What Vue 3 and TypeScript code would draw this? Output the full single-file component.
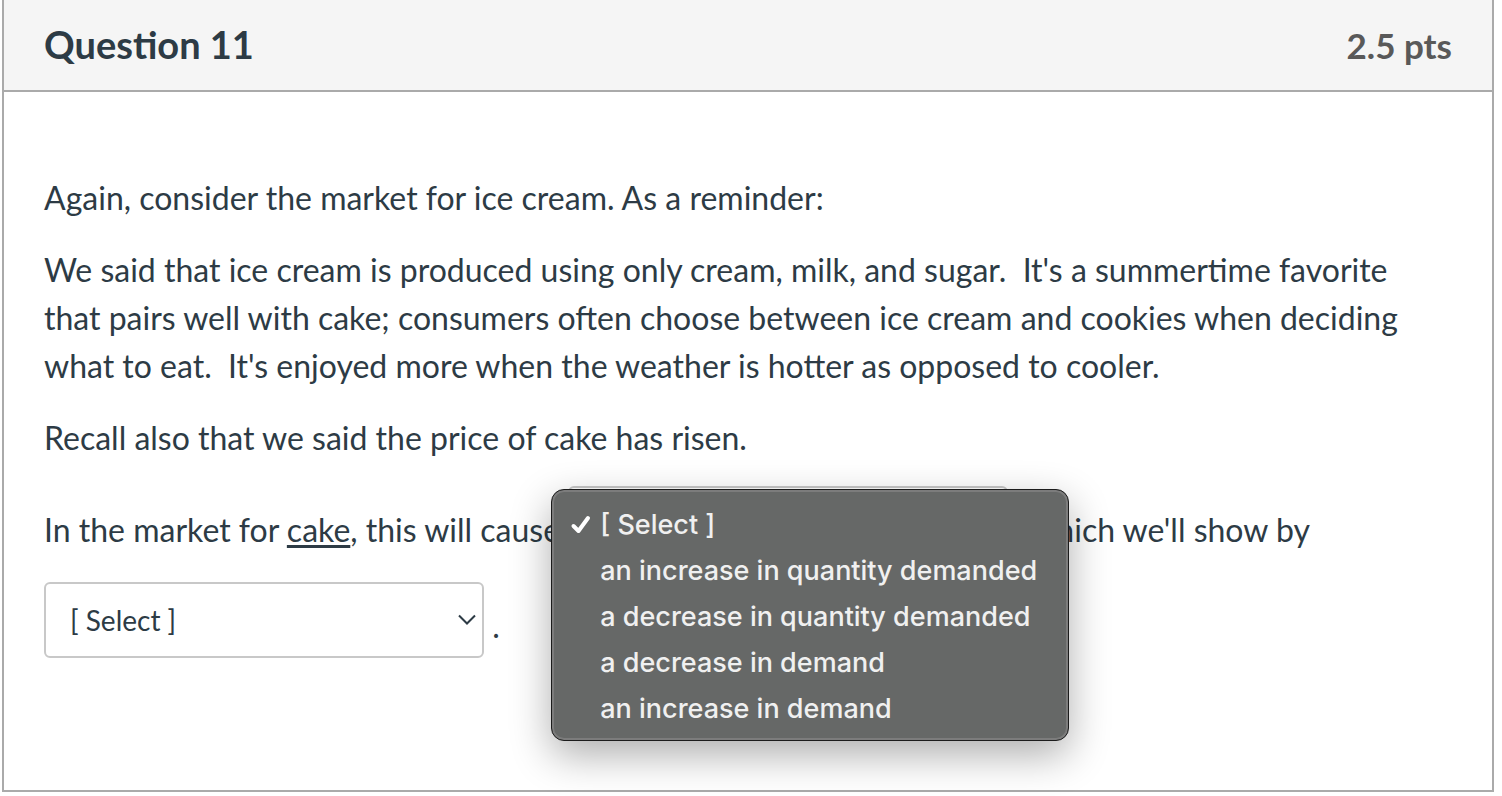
<script setup lang="ts">
import { ref } from 'vue'

const placeholder = '[ Select ]'
const effectOptions: string[] = [
  placeholder,
  'an increase in quantity demanded',
  'a decrease in quantity demanded',
  'a decrease in demand',
  'an increase in demand',
]

const effect = ref(placeholder)
const shownBy = ref(placeholder)
const menuOpen = ref(true)

function choose(option: string) {
  effect.value = option
  menuOpen.value = false
}
</script>

<template>
  <section class="question">
    <header class="question-header">
      <h2 class="title">Question 11</h2>
      <span class="points">2.5 pts</span>
    </header>
    <div class="question-body">
      <p>Again, consider the market for ice cream. As a reminder:</p>
      <p>
        We said that ice cream is produced using only cream, milk, and sugar.&nbsp; It's a summertime favorite
        that pairs well with cake; consumers often choose between ice cream and cookies when deciding
        what to eat.&nbsp; It's enjoyed more when the weather is hotter as opposed to cooler.
      </p>
      <p>Recall also that we said the price of cake has risen.</p>
      <p>
        In the market for <u>cake</u>, this will cause
        <span class="dropdown">
          <select v-model="effect" class="answer" aria-label="Effect in the market for cake" @mousedown.prevent="menuOpen = !menuOpen">
            <option v-for="option in effectOptions" :key="option">{{ option }}</option>
          </select>
          <svg class="chevron" viewBox="0 0 18 12" aria-hidden="true"><path d="M1 1.500 9 9.500l8-8" /></svg>
          <span v-if="menuOpen" class="menu" role="listbox" aria-label="Effect in the market for cake">
            <button
              v-for="option in effectOptions"
              :key="option"
              class="menu-item"
              type="button"
              role="option"
              :aria-selected="option === effect"
              @click="choose(option)"
            >
              <span class="mark">
                <svg v-if="option === effect" class="check" viewBox="0 0 24 20" aria-hidden="true"><path d="M5.500 12 10.500 17 20 4" /></svg>
              </span>
              <span>{{ option }}</span>
            </button>
          </span>
        </span>
        , which we'll show by
        <span class="dropdown">
          <select v-model="shownBy" class="answer" aria-label="How the effect is shown">
            <option>{{ placeholder }}</option>
          </select>
          <svg class="chevron" viewBox="0 0 18 12" aria-hidden="true"><path d="M1 1.500 9 9.500l8-8" /></svg>
        </span>
        .
      </p>
    </div>
  </section>
</template>

<style>
body {
  background: #fff;
}
</style>

<style scoped>
.question {
  margin: 0 8px 4px 2px;
  border: 2px solid #aaa;
  border-top: 0;
  color: #2d3b45;
  font-family: Lato, "Liberation Sans", sans-serif;
  font-size: 32px;
  line-height: 48px;
}

.question-header {
  display: flex;
  align-items: baseline;
  justify-content: space-between;
  padding: 20px 40px 21px;
  background: #f5f5f5;
  border-bottom: 2px solid #aaa;
}

.title {
  margin: 0;
  font-size: 38px;
  font-weight: 700;
}

.points {
  color: #595959;
  font-size: 35px;
  font-weight: 700;
}

.question-body {
  padding: 82px 40px 112px;
}

p {
  margin: 0 0 24px;
}

p:last-child {
  margin-bottom: 0;
}

u {
  text-decoration-thickness: 3px;
  text-underline-offset: 3px;
}

.dropdown {
  position: relative;
  display: inline-block;
  width: 440px;
  max-width: 100%;
  margin-bottom: 20px;
  vertical-align: middle;
}

.answer {
  display: block;
  box-sizing: border-box;
  width: 100%;
  height: 76px;
  padding: 0 24px;
  appearance: none;
  background: #fff;
  border: 2px solid #c8c8c8;
  border-radius: 6px;
  color: #2d3b45;
  font-family: inherit;
  font-size: 28px;
}

.chevron {
  position: absolute;
  top: 32px;
  right: 8px;
  width: 18px;
  height: 12px;
  fill: none;
  stroke: #2d3b45;
  stroke-width: 2;
  pointer-events: none;
}

.menu {
  position: absolute;
  z-index: 1;
  top: 3px;
  left: -17px;
  display: flex;
  flex-direction: column;
  box-sizing: border-box;
  width: 518px;
  padding: 11px 0 9px;
  background: #666867;
  border: 1px solid #1c1c1c;
  border-radius: 13px;
  box-shadow: inset 0 0 0 2px #7c7c7c, 0 14px 40px rgba(0, 0, 0, 0.32);
}

.menu-item {
  display: flex;
  align-items: center;
  height: 46px;
  padding: 0 16px;
  background: none;
  border: 0;
  color: #f0f0f0;
  font-family: Inter, "Liberation Sans", sans-serif;
  font-size: 27px;
  font-weight: 500;
  text-align: left;
  white-space: nowrap;
}

.mark {
  display: flex;
  align-items: center;
  width: 32px;
}

.check {
  width: 24px;
  height: 20px;
  fill: none;
  stroke: #fff;
  stroke-width: 4;
  stroke-linecap: round;
  stroke-linejoin: round;
}
</style>
